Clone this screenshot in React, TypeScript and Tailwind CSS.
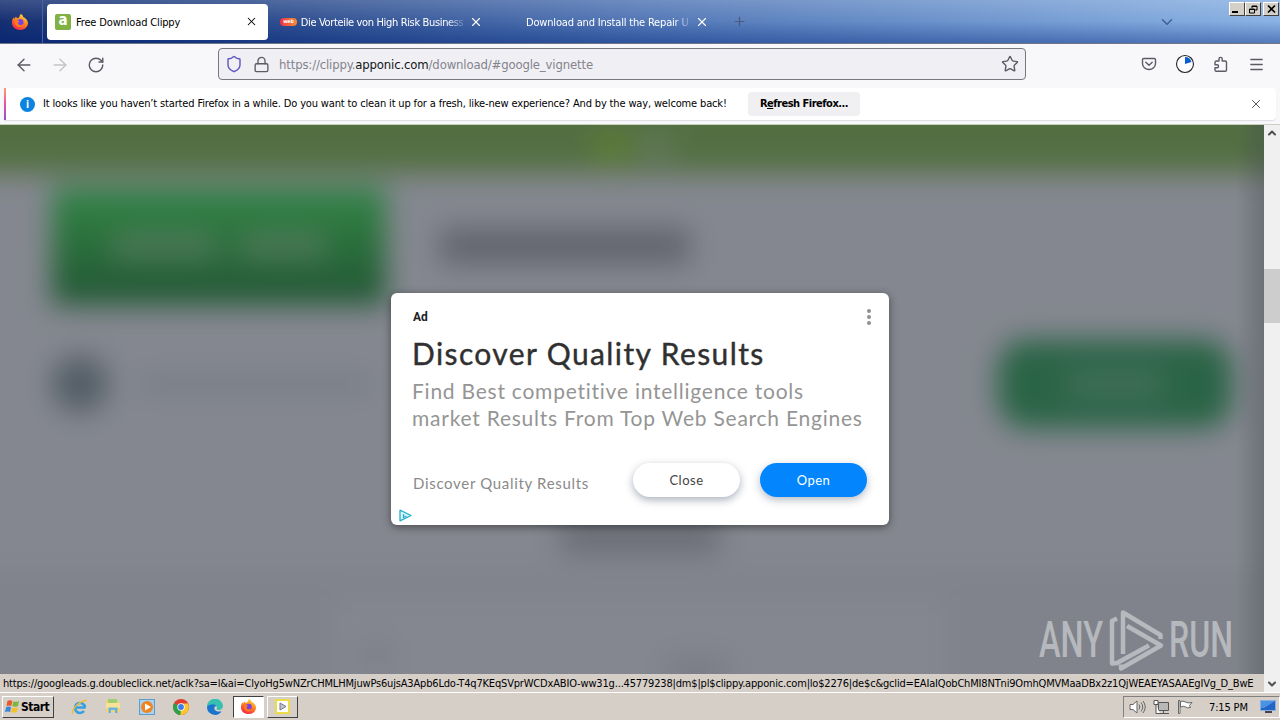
import React from 'react';
import { ArrowLeft, ArrowRight, ChevronDown, ChevronUp, Lock, Menu, Plus, RotateCw, Shield, Star, X } from 'lucide-react';

const FirefoxIcon = ({ size = 18 }: { size?: number }) => (
  <svg width={size} height={size} viewBox="0 0 18 18">
    <defs>
      <linearGradient id="fx" x1="0.8" y1="0" x2="0.3" y2="1">
        <stop offset="0" stopColor="#ffe04a" />
        <stop offset="0.45" stopColor="#ff8a1c" />
        <stop offset="1" stopColor="#f5204e" />
      </linearGradient>
    </defs>
    <path
      d="M10 1c1.500 1 2 2 2.400 3.200C14.500 5 17 7 17 10.500A7.500 7 0 0 1 9 17C4.500 17 1 14 1 9.800 1 7.500 1.700 6 2.500 4.600l.9 1.100L5 3.500l1 1.700C8 5 8.500 4 8.800 2.500 9 1.800 9.500 1.300 10 1z"
      fill="url(#fx)"
    />
    <circle cx="9.300" cy="9.300" r="3.200" fill="#7542e5" />
    <path d="M4 8c1.500-1.200 3-.8 4.500.2C7.500 9 7 9.500 7.300 11c1 1.500 3.200 1.500 5.200 0-1 3-3.500 4-6 2.800C4.500 12.800 3.600 10.500 4 8z" fill="#ff7a1e" />
  </svg>
);

const PocketIcon = () => (
  <svg width="16" height="16" viewBox="0 0 16 16" fill="none" stroke="#5b5b66" strokeWidth="1.400" strokeLinecap="round" strokeLinejoin="round">
    <path d="M2.800 2.500h10.400c.8 0 1.300.5 1.300 1.300v3.700a6.500 6 0 0 1-13 0V3.800c0-.8.500-1.300 1.300-1.300z" />
    <path d="M4.800 6.300 8 9.300l3.200-3" />
  </svg>
);

const PuzzleIcon = () => (
  <svg width="17" height="17" viewBox="0 0 17 17" fill="none" stroke="#5b5b66" strokeWidth="1.400" strokeLinejoin="round">
    <path d="M2 6.500c0-1 .5-1.500 1.500-1.500H6V3a1.600 1.600 0 0 1 3.200 0v2h3c.9 0 1.300.5 1.300 1.300V14c0 .8-.5 1.300-1.300 1.300H3.300c-.8 0-1.300-.5-1.300-1.300v-2.200h2a1.500 1.500 0 0 0 0-3.100H2z" />
  </svg>
);

const ProgressIcon = () => (
  <svg width="20" height="20" viewBox="0 0 20 20">
    <circle cx="10" cy="10" r="8.500" fill="#fdfdfe" stroke="#22222c" strokeWidth="1.100" />
    <path d="M10 10V3a7 7 0 0 1 6.500 5z" fill="#0a5fd0" />
  </svg>
);

const AnyRunLogo = () => (
  <svg width="240" height="66" viewBox="0 0 240 66" fill="#c4c7ca" fillOpacity="0.8">
    <g fontFamily="Roboto, sans-serif" fontSize="50" fontWeight="500">
      <text x="3" y="49" textLength="64" lengthAdjust="spacingAndGlyphs">ANY</text>
      <text x="133" y="49" textLength="64" lengthAdjust="spacingAndGlyphs">RUN</text>
    </g>
    <g fill="none" stroke="#c4c7ca" strokeOpacity="0.8" strokeWidth="4.500" strokeLinejoin="round">
      <path d="M81 10.500 76 13v42.500l5-.5 32-17.500" />
      <path d="M87 46V4.500l37.500 22.500v4" />
      <path d="M91 18l34 19.500L85 60.500v-4" />
    </g>
  </svg>
);

const WindowButton = ({ children }: { children: React.ReactNode }) => (
  <div className="flex h-[14px] w-[16px] items-center justify-center border border-t-white border-r-[#404040] border-b-[#404040] border-l-white bg-[#d4d0c8]">
    {children}
  </div>
);

const TitleBar = () => (
  <div className="relative flex h-[44px] shrink-0 items-center border-b border-[#707684] bg-linear-to-r from-[#0a246a] via-[#4a70b2] via-50% to-[#84aee2]">
    <div className="absolute inset-0 bg-linear-to-b from-white/20 via-white/5 to-[#0a2a80]/40" />
    <div className="relative flex h-full w-[43px] items-center justify-center border-r border-[#4b62a0] pr-[3px]">
      <FirefoxIcon />
    </div>
    <div className="relative ml-1 flex h-[36px] w-[221px] items-center rounded bg-white pl-2">
      <div className="flex size-4 items-center justify-center rounded-xs bg-[#7fb243] pb-0.5 text-[15px] leading-none font-bold text-white">a</div>
      <span className="mt-[4px] ml-[5px] flex-1 tracking-[-0.15px] text-black">Free Download Clippy</span>
      <X size={13} strokeWidth={1.900} className="mr-[10px] text-black" />
    </div>
    <div className="relative ml-[12px] flex h-full w-[203px] items-center text-white">
      <div className="flex h-[8px] w-[17px] items-center justify-center rounded-full bg-linear-to-r from-[#ef2a48] to-[#f58a2e] text-[5px] font-bold text-white">web</div>
      <span className="mt-[4px] ml-1 w-[168px] mask-r-from-88% tracking-[-0.35px] whitespace-nowrap">Die Vorteile von High Risk Business</span>
      <X size={14} strokeWidth={1.900} className="ml-[2px] shrink-0" />
    </div>
    <div className="relative ml-[43px] flex h-full w-[186px] items-center text-white">
      <span className="mt-[4px] w-[168px] overflow-hidden mask-r-from-88% tracking-[-0.18px] whitespace-nowrap">Download and Install the Repair U</span>
      <X size={14} strokeWidth={1.900} className="ml-px shrink-0" />
    </div>
    <Plus size={15} strokeWidth={1.900} className="relative ml-[20px] text-[#4d5a80]" />
    <ChevronDown size={18} strokeWidth={2} className="relative mr-[53px] ml-auto text-[#425f91]" />
    <div className="relative mr-px flex self-start pt-[2px]">
      <WindowButton>
        <div className="mt-[6px] mr-1 h-[2px] w-[6px] bg-black" />
      </WindowButton>
      <WindowButton>
        <svg width="9" height="9" viewBox="0 0 9 9" fill="none" stroke="#000">
          <path d="M3 3V1h5v4H6M3 1.500h5M.5 4h5v4h-5zM.5 4.500h5" />
        </svg>
      </WindowButton>
      <div className="ml-[2px]">
        <WindowButton>
          <svg width="9" height="8" viewBox="0 0 9 8" stroke="#000" strokeWidth="1.600">
            <path d="M1 .5l7 7M8 .5l-7 7" />
          </svg>
        </WindowButton>
      </div>
    </div>
  </div>
);

const Toolbar = () => (
  <div className="flex h-[44px] shrink-0 items-center bg-[#f8f8fb] text-[#5b5b66]">
    <ArrowLeft size={20} strokeWidth={1.700} className="mb-[3px] ml-[14px]" />
    <ArrowRight size={20} strokeWidth={1.700} className="mb-[3px] ml-[16px] text-[#c4c4ca]" />
    <RotateCw size={18} strokeWidth={1.900} className="mb-[3px] ml-[17px]" />
    <div className="mb-[4px] ml-[113px] flex h-[32px] w-[808px] items-center rounded-[4px] border border-[#77777f] bg-[#f0f0f4]">
      <Shield size={18} strokeWidth={1.900} className="ml-[6px] text-[#5f57c0]" />
      <Lock size={17} strokeWidth={1.900} className="ml-[10px]" />
      <span className="mt-[2px] ml-[9px] flex-1 text-[13px] tracking-[-0.15px] text-[#83838c]">
        https://clippy.<span className="text-[#15141a]">apponic.com</span>/download/#google_vignette
      </span>
      <Star size={18} strokeWidth={1.900} className="mr-[6px]" />
    </div>
    <div className="ml-auto flex items-center gap-[18px] pr-[15px] pb-[4px]">
      <PocketIcon />
      <ProgressIcon />
      <PuzzleIcon />
      <Menu size={17} strokeWidth={1.900} />
    </div>
  </div>
);

const NotificationBar = () => (
  <div className="flex h-[37px] shrink-0 border-b border-[#c9d0bd] bg-[#f8f8fb] px-1 pb-[4px]">
    <div className="flex flex-1 items-center rounded-r bg-white shadow-[0_1px_1px_#dcdce4]">
      <div className="h-full w-[2px] bg-linear-to-b from-[#ff9a6c] via-[#e84fa0] to-[#8a4fd0]" />
      <div className="ml-[14px] flex size-[15px] items-center justify-center rounded-full bg-[#0a84e0] text-[10px] font-bold text-white">i</div>
      <span className="ml-[8px] w-[705px] tracking-[-0.15px] whitespace-nowrap text-black">
        It looks like you haven’t started Firefox in a while. Do you want to clean it up for a fresh, like-new experience? And by the way, welcome back!
      </span>
      <div className="flex h-[24px] w-[112px] items-center justify-center rounded bg-[#f0f0f2] pt-px font-bold tracking-[-0.5px] whitespace-nowrap text-black">
        <span>R<u>e</u>fresh Firefox...</span>
      </div>
      <X size={14} strokeWidth={1.700} className="mr-[13px] ml-auto text-[#55555f]" />
    </div>
  </div>
);

// The page behind the ad is dimmed and heavily blurred
const BlurredPage = () => (
  <div className="absolute inset-0 overflow-hidden bg-[#80838b]">
    <div className="-mx-10 -mt-10 blur-[14px]">
      <div className="flex h-[88px] items-center justify-center bg-[#536f42] pt-9 pr-4">
        <div className="h-6 w-10 rounded-full bg-[#5f8033]" />
        <div className="ml-2 h-5 w-8 bg-[#687c62]" />
      </div>
      <div className="flex h-[396px] flex-col bg-[#84878f] pr-[88px] pl-[92px]">
        <div className="flex items-center pt-[14px]">
          <div className="flex h-[118px] w-[334px] items-center justify-center gap-6 bg-linear-to-b from-[#34864a] via-[#2a703b] via-45% to-[#225535]">
            <div className="h-7 w-[104px] bg-[#4b7755]" />
            <div className="h-7 w-[86px] bg-[#4b7755]" />
          </div>
          <div className="ml-[54px] h-[36px] w-[250px] bg-[#62656e]" />
        </div>
        <div className="mt-[34px] flex h-[90px] items-center">
          <div className="size-[56px] rounded-full bg-[#525d66]" />
          <div className="ml-[32px] h-[18px] w-[230px] bg-[#797d85]" />
          <div className="ml-auto flex h-[88px] w-[234px] items-center justify-center rounded-[28px] bg-[#2a6446]">
            <div className="h-7 w-24 bg-[#426f58]" />
          </div>
        </div>
      </div>
      <div className="flex h-[220px] flex-col items-center bg-[#80838b]">
        <div className="-mt-[50px] h-[34px] w-[160px] bg-[#6a6d75]" />
        <div className="mt-[46px] flex w-[610px] flex-1 justify-between bg-[#84878f] px-6 pt-10">
          <div className="h-8 w-8 bg-[#7d8088]" />
          <div className="mt-4 mr-48 h-8 w-16 bg-[#7a7d85]" />
        </div>
      </div>
    </div>
    <div className="absolute inset-y-0 right-0 w-[44px] bg-linear-to-l from-[#454d50]/60 to-transparent" />
  </div>
);

const AdCard = () => (
  <div className="absolute top-[168px] left-[391px] flex h-[232px] w-[498px] flex-col rounded-md bg-white px-[21px] font-[Lato,sans-serif] shadow-[0_2px_8px_rgba(0,0,0,0.45)]">
    <div className="flex h-[46px] items-center justify-between">
      <span className="mt-[2px] ml-px font-[Roboto,sans-serif] text-[12px] font-bold text-[#202124]">Ad</span>
      <div className="mt-[2px] mr-[-3px] flex flex-col gap-[2px]">
        <div className="size-1 rounded-full bg-[#909090]" />
        <div className="size-1 rounded-full bg-[#909090]" />
        <div className="size-1 rounded-full bg-[#909090]" />
      </div>
    </div>
    <div className="-mt-px mb-px h-[38px] text-[30px] leading-[30px] tracking-[1.390px] whitespace-nowrap text-[#303030] [-webkit-text-stroke:0.4px_#303030]">Discover Quality Results</div>
    <div className="text-[21px] leading-[27px] tracking-[0.760px] whitespace-nowrap text-[#959595]">
      <div>Find Best competitive intelligence tools</div>
      <div>market Results From Top Web Search Engines</div>
    </div>
    <div className="mt-[32px] flex h-[34px] items-center">
      <span className="mt-[6px] ml-px flex-1 text-[15px] tracking-[0.680px] text-[#8a8a8a]">Discover Quality Results</span>
      <div className="flex h-full w-[107px] items-center justify-center rounded-full bg-white pt-px text-[13px] tracking-[0.5px] text-[#444] shadow-[0_3px_8px_rgba(40,60,90,0.4)]">Close</div>
      <div className="mr-px ml-[20px] flex h-full w-[107px] items-center justify-center rounded-full bg-[#0386fd] pt-px text-[13px] tracking-[0.4px] text-white shadow-[0_3px_8px_rgba(40,60,90,0.35)]">Open</div>
    </div>
    <svg className="mt-[12px] -ml-[13px]" width="13" height="13" viewBox="0 0 13 13" fill="#e0f6fa" stroke="#26b0cc" strokeWidth="1.300" strokeLinejoin="round">
      <path d="M1 1.200v10.600L12 6.500z" />
      <path d="M4.500 5v3.500l3-1.500" />
    </svg>
  </div>
);

const Scrollbar = () => (
  <div className="absolute inset-y-0 right-0 flex w-[16px] flex-col items-center bg-[#f0f0f0]">
    <ChevronUp size={12} strokeWidth={4} className="mt-[2px] text-[#505050]" />
    <div className="mt-[130px] h-[54px] w-full bg-[#cdcdcd]" />
    <ChevronDown size={12} strokeWidth={4} className="mt-auto mb-[2px] text-[#505050]" />
  </div>
);

const Taskbar = () => (
  <div className="flex h-[28px] shrink-0 items-center border-t border-white bg-[#d6cfc8]">
    <div className="ml-[2px] flex h-[22px] w-[52px] items-center border border-t-white border-r-[#404040] border-b-[#404040] border-l-white pl-[2px]">
      <svg width="15" height="15" viewBox="0 0 15 15">
        <path d="M2.500 2Q5 .5 7.300 2L6.300 7Q4 5.800 1.500 7z" fill="#e8582a" />
        <path d="M8.300 2.400Q11 3.500 14 2l-1 5Q10.500 8.300 7.300 7z" fill="#7cb63c" />
        <path d="M1.200 8Q4 6.800 6.100 8l-1 5Q3 11.800 0 13z" fill="#3c88d8" />
        <path d="M7.100 8.300q2.700 1.200 5.700 0l-1 4.700q-2.700 1.300-5.700 0z" fill="#f6c02c" />
      </svg>
      <span className="ml-px text-[12px] font-bold tracking-[-0.5px] text-black">Start</span>
    </div>
    <svg className="ml-[17px]" width="18" height="18" viewBox="0 0 18 18" fill="none">
      <path d="M14.500 9.500H5M14 9.500A5 5 0 1 0 13 13" stroke="#35a0e0" strokeWidth="2.600" />
      <path d="M2 15.500C-.5 12 10 1.500 16 2.500" stroke="#edbd3c" strokeWidth="1.500" />
    </svg>
    <svg className="ml-[16px]" width="16" height="17" viewBox="0 0 16 17">
      <path d="M1 2h5l1 2h8v10H1z" fill="#f4d272" />
      <path d="M3 1h9v4H3z" fill="#9fcf72" />
      <path d="M1 5h14v5H1z" fill="#f8e298" />
      <path d="M3.500 15V9.500h9V15h-2.500v-3H6v3z" fill="#68b4e0" />
    </svg>
    <svg className="ml-[18px]" width="16" height="16" viewBox="0 0 16 16">
      <rect x="0.500" y="0.500" width="15" height="15" fill="#a8d2f0" stroke="#5a9ed0" />
      <circle cx="8" cy="8" r="6" fill="#f08420" />
      <path d="M6 4.500v7L12 8z" fill="#fff" />
    </svg>
    <svg className="ml-[18px]" width="16" height="16" viewBox="0 0 16 16">
      <circle cx="8" cy="8" r="8" fill="#e23c30" />
      <path d="M8 8 1.200 3.900A8 8 0 0 0 7.500 16l3.700-6z" fill="#2da04a" />
      <path d="M8 8l-.5 8A8 8 0 0 0 15 4.500H8z" fill="#fbc72a" />
      <circle cx="8" cy="8" r="3.700" fill="#fff" />
      <circle cx="8" cy="8" r="2.900" fill="#3b7de8" />
    </svg>
    <svg className="ml-[18px]" width="16" height="16" viewBox="0 0 16 16">
      <path d="M0 8.500A8 8 0 0 1 16 7c0 2.500-2 4-4.500 4C9 11 9.500 9.500 10 8.500 9.500 5 3 4 0 8.500z" fill="#36c0b0" />
      <path d="M0 8C2 4.500 8 4.500 9.500 7 6 7 6 13.500 14.500 12.500A8 8 0 0 1 0 8z" fill="#1874cc" />
    </svg>
    <div className="ml-[10px] flex h-[22px] w-[31px] items-center justify-center border border-t-[#404040] border-r-white border-b-white border-l-[#404040] bg-white">
      <FirefoxIcon size={17} />
    </div>
    <div className="ml-[3px] flex h-[22px] w-[31px] items-center justify-center border border-t-white border-r-[#404040] border-b-[#404040] border-l-white">
      <svg width="15" height="15" viewBox="0 0 15 15">
        <rect x="1" y="1" width="13" height="13" fill="#fff" stroke="#ecdd48" strokeWidth="2" />
        <path d="M5 4v7l6-3.500z" fill="#c4c4d0" stroke="#777788" />
      </svg>
    </div>
    <div className="ml-auto flex h-[22px] w-[157px] items-center border border-t-[#808080] border-r-white border-b-white border-l-[#808080]">
      <svg className="ml-[5px]" width="17" height="16" viewBox="0 0 17 16" fill="none" stroke="#666" strokeWidth="1">
        <path d="M1 5.500h3L8 2v12l-4-3.500H1z" fill="#fff" />
        <path d="M10 5.500q1.800 2.500 0 5M12 3.500q3.500 4.500 0 9M14 2q4.500 6 0 12" />
      </svg>
      <svg className="ml-[7px]" width="17" height="16" viewBox="0 0 17 16" fill="#fff" stroke="#555">
        <path d="M5.500 3.500h10v8h-10z" fill="#b8b8b8" />
        <path d="M5 14.500h11M10.500 12v2M1 1.500h4v4H1zM3 6v8.500h4" />
      </svg>
      <svg className="ml-[7px]" width="16" height="16" viewBox="0 0 16 16" fill="#fff" stroke="#666">
        <path d="M1.500 1.500h1.500v13H1.500z" />
        <path d="M3.500 2.500q2.500-1 5 .5t6.500.5l-2.500 3 1 2q-3 1-5-.5t-5 0z" />
      </svg>
      <span className="mt-[3px] ml-[16px] w-[51px] tracking-[-0.15px] whitespace-nowrap text-black">7:15 PM</span>
      <svg width="16" height="13" viewBox="0 0 16 13">
        <rect x="0.500" y="0.500" width="15" height="10" fill="#2464c4" stroke="#8ab0e0" />
        <path d="M1 1h14L4 8H1z" fill="#4b92e4" />
        <path d="M5 11h7v2H5z" fill="#445" />
      </svg>
    </div>
  </div>
);

export default function App() {
  return (
    <div className="flex h-[720px] w-[1280px] flex-col overflow-hidden font-['DejaVu_Sans_Condensed','Noto_Sans',sans-serif] text-[11px]">
      <TitleBar />
      <Toolbar />
      <NotificationBar />
      <div className="relative flex-1">
        <BlurredPage />
        <AdCard />
        <Scrollbar />
        <div className="absolute right-[4px] bottom-[18px]">
          <AnyRunLogo />
        </div>
        <div className="absolute bottom-0 left-0 flex h-[18px] w-[1264px] items-center bg-[#d6cfc8] pt-[3px] pl-[3px] tracking-[-0.174px] whitespace-nowrap text-black">
          https://googleads.g.doubleclick.net/aclk?sa=l&ai=ClyoHg5wNZrCHMLHMjuwPs6ujsA3Apb6Ldo-T4q7KEqSVprWCDxABIO-ww31g...45779238|dm$|pl$clippy.apponic.com|lo$2276|de$c&gclid=EAIaIQobChMI8NTni9OmhQMVMaaDBx2z1QjWEAEYASAAEgIVg_D_BwE
        </div>
      </div>
      <Taskbar />
    </div>
  );
}
